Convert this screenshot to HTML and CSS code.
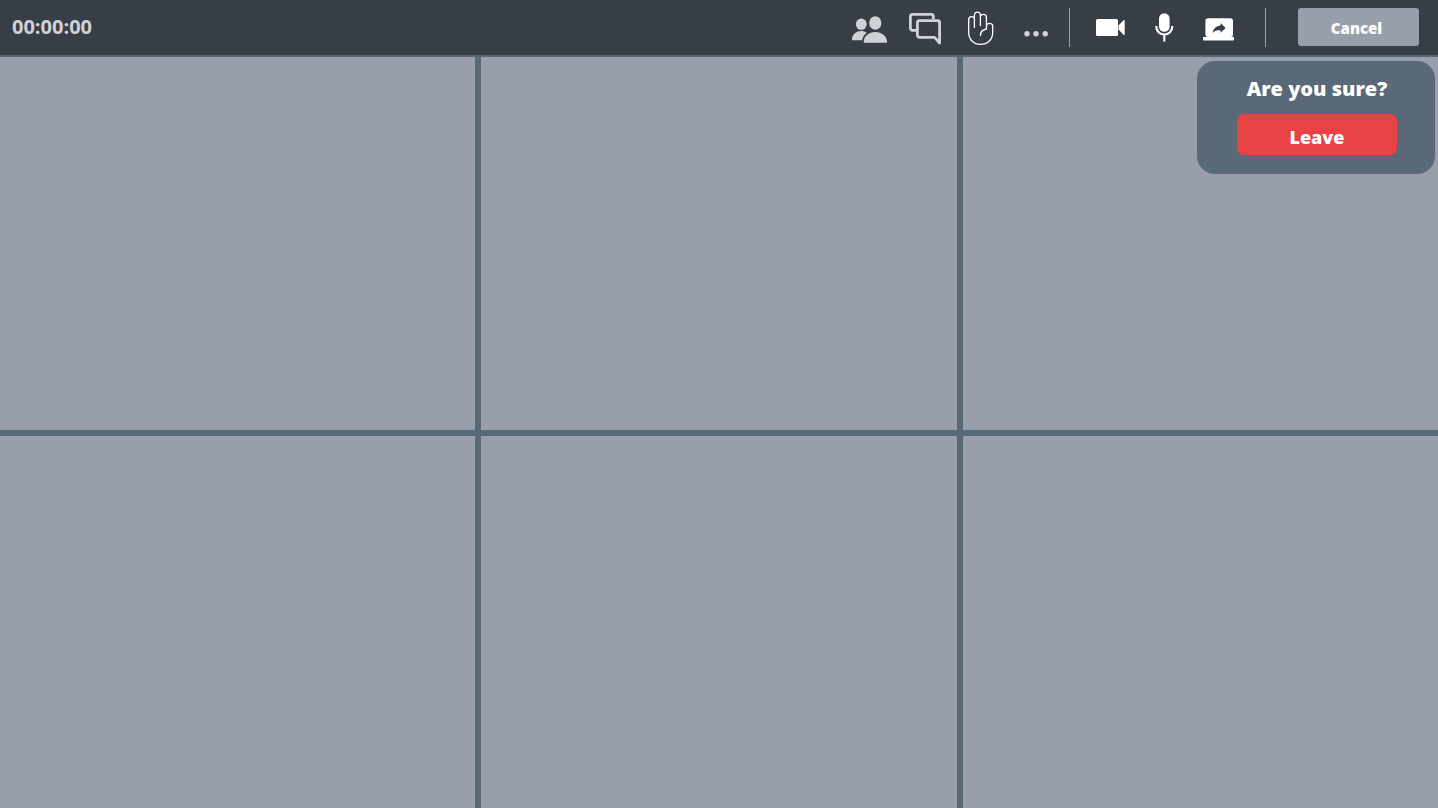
FILE: index.html
```html
<!DOCTYPE html>
<html lang="en">
<head>
<meta charset="utf-8">
<meta name="viewport" content="width=device-width, initial-scale=1">
<title>Meeting</title>
<link rel="stylesheet" href="styles.css">
</head>
<body>
<header class="topbar">
  <time class="timer">00:00:00</time>
  <div class="tools">
    <button class="tool" type="button" aria-label="Participants">
      <svg viewBox="0 0 36 40" fill="currentColor"><ellipse cx="9.3" cy="16.3" rx="5.4" ry="5.7"/><ellipse cx="23.3" cy="15" rx="6.1" ry="6.8"/><path d="M0 32.3V30.500C0.500 26.500 4.500 23 9 23c2.200 0 4.300.6 5.800 1.800-2.600 1.800-4.200 4.300-4.800 7.500z"/><path d="M11.700 34.800V33.500C12 28.400 16.800 24 23.300 24S34.800 28.400 35 33.500v1.300z"/></svg>
    </button>
    <button class="tool" type="button" aria-label="Chat">
      <svg viewBox="0 0 36 40" fill="none" stroke="currentColor" stroke-width="2.800" stroke-linejoin="round"><path d="M8 22.300H4.400a2 2 0 0 1-2-2V8.400a2 2 0 0 1 2-2H23.300a2 2 0 0 1 2 2V11"/><path d="M11.400 12.700H29.600a2 2 0 0 1 2 2V35l-5-5.700H11.400a2 2 0 0 1-2-2V14.700a2 2 0 0 1 2-2z"/></svg>
    </button>
    <button class="tool tool-bright" type="button" aria-label="Raise hand">
      <svg viewBox="0 0 36 40" fill="none" stroke="currentColor" stroke-width="1.300" stroke-linecap="round" stroke-linejoin="round"><path d="M10.400 19.500V11.300C10.400 7.800 4.700 7.800 4.700 11.600V24C4.700 31.500 9.500 36.400 16.600 36.400S28.700 31.300 28.700 24.500V18C28.700 14.400 22.400 14.400 22.400 18.200V9.300C22.400 5.400 16.400 5.400 16.400 9.300V7.400C16.400 3.100 10.400 3.100 10.400 7.400V11.300M16.400 9.300V17.500M22.400 18.200V21C18.500 21.700 16.400 24.200 16.400 27.500"/></svg>
    </button>
    <button class="tool" type="button" aria-label="More options">
      <svg viewBox="0 0 36 40" fill="currentColor"><circle cx="7" cy="25.700" r="2.700"/><circle cx="16" cy="25.700" r="2.700"/><circle cx="25.200" cy="25.700" r="2.700"/></svg>
    </button>
  </div>
  <div class="tools devices">
    <button class="tool tool-bright" type="button" aria-label="Camera">
      <svg viewBox="0 0 36 40" fill="currentColor"><rect x="4" y="11" width="22" height="17" rx="1.500"/><path d="M26.500 17.500 31.500 12.300Q32.700 11.500 32.700 13V26Q32.700 27.500 31.500 26.700L26.500 21.500z"/></svg>
    </button>
    <button class="tool tool-bright" type="button" aria-label="Microphone">
      <svg viewBox="0 0 36 40" fill="currentColor"><rect x="13" y="5.300" width="10.600" height="18.400" rx="5.300"/><path d="M10.300 18v.5a8 8 0 0 0 16 0V18M18.300 26.500V33.500" fill="none" stroke="currentColor" stroke-width="2.200"/></svg>
    </button>
    <button class="tool tool-bright" type="button" aria-label="Share screen">
      <svg viewBox="0 0 36 40" fill="currentColor"><path fill-rule="evenodd" d="M8 10.300H30.500Q33 10.300 33 12.800V26.500Q33 29 30.500 29H8Q5.400 29 5.400 26.500V12.800Q5.400 10.300 8 10.300zM20.500 15V17.400C16 17.800 13.400 20.500 12.600 25 15 22.600 17.200 22.200 20.500 22.300V24.800L25.700 19.900z"/><path d="M3 29H34V31.500Q34 32.500 33 32.500H4Q3 32.500 3 31.500z"/></svg>
    </button>
  </div>
  <button class="cancel" type="button">Cancel</button>
</header>
<main class="stage">
  <section class="tile" aria-label="Participant 1"></section>
  <section class="tile" aria-label="Participant 2"></section>
  <section class="tile" aria-label="Participant 3"></section>
  <section class="tile" aria-label="Participant 4"></section>
  <section class="tile" aria-label="Participant 5"></section>
  <section class="tile" aria-label="Participant 6"></section>
  <div class="confirm" role="dialog" aria-labelledby="confirm-title">
    <h2 class="confirm-title" id="confirm-title">Are you sure?</h2>
    <button class="leave" type="button">Leave</button>
  </div>
</main>
</body>
</html>
```
FILE: styles.css
```css
* {
  box-sizing: border-box;
}

body {
  margin: 0;
  min-height: 100vh;
  display: flex;
  flex-direction: column;
  background: #5a6977;
  font-family: "Open Sans", sans-serif;
}

button {
  border: 0;
  padding: 0;
  color: #fff;
  font-family: inherit;
  font-weight: 800;
  cursor: pointer;
}

.topbar {
  display: flex;
  align-items: flex-start;
  padding: 8px 19px 8px 12px;
  background: #373e46;
  height: 55px;
}

.timer {
  margin-right: auto;
  color: #d0d2d5;
  font-size: 20px;
  font-weight: 700;
  line-height: 38px;
}

.tools {
  display: flex;
  gap: 20px;
  padding-right: 13px;
}

.devices {
  gap: 18px;
  height: 39px;
  padding: 0 29px 0 22px;
  border: solid #989eaa;
  border-width: 0 1px;
}

.tool {
  width: 36px;
  height: 40px;
  background: none;
  color: #d0d2d5;
}

.tool-bright {
  color: #fff;
}

.tool svg {
  display: block;
  width: 36px;
  height: 40px;
}

.cancel {
  width: 121px;
  height: 38px;
  margin-left: 32px;
  padding: 1px 4px 0 0;
  border-radius: 3px;
  background: #989eaa;
  font-size: 15px;
}

.stage {
  position: relative;
  flex: 1;
  display: grid;
  grid-template-columns: repeat(3, 1fr);
  grid-template-rows: repeat(2, 1fr);
  gap: 6px;
  margin-top: 2px;
}

.tile {
  background: #989eaa;
}

.confirm {
  position: absolute;
  top: 4px;
  right: 3px;
  width: 238px;
  display: flex;
  flex-direction: column;
  align-items: center;
  gap: 11px;
  padding: 14px 19px 19px 21px;
  border-radius: 18px;
  background: #5a6977;
  color: #fff;
}

.confirm-title {
  margin: 0;
  font-size: 20px;
  font-weight: 800;
  line-height: 28px;
}

.leave {
  width: 160px;
  height: 41px;
  padding-top: 4px;
  border-radius: 7px;
  background: #e84245;
  font-size: 18px;
}
```
